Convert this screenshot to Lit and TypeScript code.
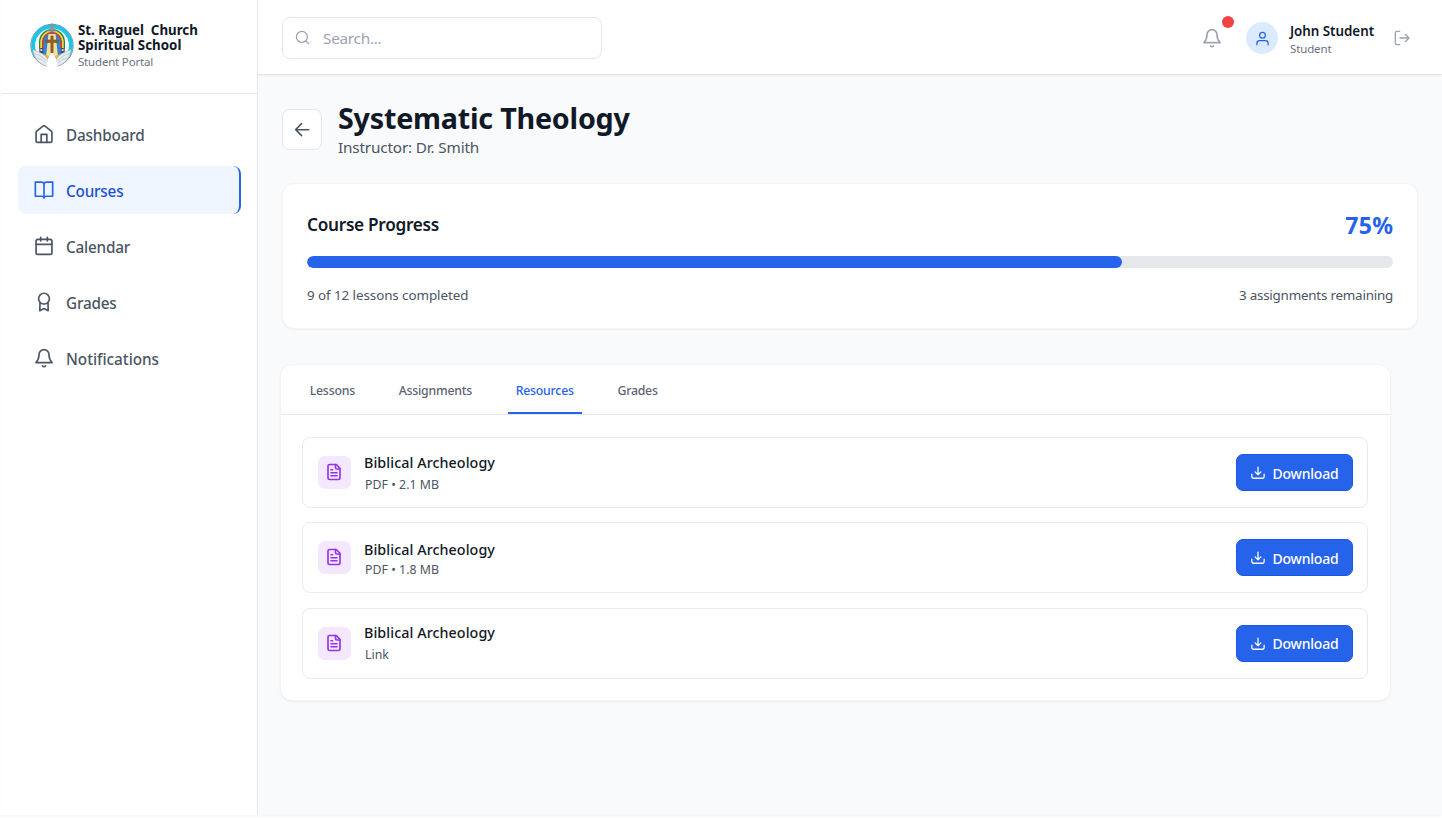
import { LitElement, html, css, svg } from "lit";
import { customElement } from "lit/decorators.js";

const icon = (body: unknown, size = 20, stroke = 2) => html`<svg class="icon" width=${size} height=${size} viewBox="0 0 24 24" fill="none" stroke="currentColor" stroke-width=${stroke} stroke-linecap="round" stroke-linejoin="round">${body}</svg>`;

const icons = {
  home: svg`<path d="M2.500 10.200a2 2 0 0 1 .75-1.560l7.500-6.100a2 2 0 0 1 2.500 0l7.500 6.100a2 2 0 0 1 .75 1.560V20a2 2 0 0 1-2 2h-15a2 2 0 0 1-2-2z"/><path d="M8.600 22v-9.600h6.800V22"/>`,
  book: svg`<path d="M1.600 2.500H9a3.400 3.400 0 0 1 3 2A3.400 3.400 0 0 1 15 2.500h7.400v17h-7.900a3 3 0 0 0-2.500 1.700 3 3 0 0 0-2.500-1.700H1.600z"/><path d="M12 4.500V21.200"/>`,
  calendar: svg`<rect x="2.500" y="4" width="19" height="18" rx="2"/><path d="M8 1.600v4.400M16 1.600v4.400M2.500 10h19"/>`,
  award: svg`<circle cx="12" cy="8" r="6.500"/><path d="M7.200 12.600 7 22.400l5-2.600 5 2.600-.2-9.800"/>`,
  bell: svg`<path d="M6 8a6 6 0 0 1 12 0c0 5 1.500 7.200 3.700 9.500H2.300C4.500 15.200 6 13 6 8z"/><path d="M10.300 21.500a2.200 2.200 0 0 0 3.400 0"/>`,
  search: svg`<circle cx="11" cy="11" r="8.800"/><path d="m21.800 21.800-4.600-4.600"/>`,
  back: svg`<path d="m11.500 19.500-8-8 8-8M3.500 11.500H21"/>`,
  user: svg`<circle cx="12" cy="6.800" r="4.600"/><path d="M3 22v-2a4.500 4.500 0 0 1 4.500-4.500h9a4.500 4.500 0 0 1 4.500 4.500v2"/>`,
  logout: svg`<path d="M8.500 22H4.500a2.500 2.500 0 0 1-2.500-2.500v-15A2.500 2.500 0 0 1 4.500 2h4M17 17.500l5.500-5.500L17 6.500M22 12H9"/>`,
  file: svg`<path d="M15 2H6a2 2 0 0 0-2 2v16a2 2 0 0 0 2 2h12a2 2 0 0 0 2-2V7z"/><path d="M14 2v4a2 2 0 0 0 2 2h4M10 9H8M16 13H8M16 17H8"/>`,
  download: svg`<path d="M1.500 14v4.500A2.500 2.500 0 0 0 4 21h16a2.500 2.500 0 0 0 2.500-2.500V14M7 10l5 5 5-5M12 15V2"/>`,
};

const crest = svg`
  <circle cx="22" cy="23" r="21.200" fill="#e9f3f5" stroke="#4b7a86" stroke-width=".8"/>
  <circle cx="22" cy="23" r="18.900" fill="none" stroke="#1fc3e8" stroke-width="4"/>
  <circle cx="22" cy="23" r="16.600" fill="#f4f7f6"/>
  <path d="M12 36V19a10 10 0 0 1 20 0v17z" fill="#2f86d6"/>
  <g fill="none" stroke-width="1.600">
    <path d="M9.800 26V19.500a12.200 12.200 0 0 1 24.400 0V26" stroke="#23843c"/>
    <path d="M11.300 26V19.500a10.700 10.700 0 0 1 21.400 0V26" stroke="#f2d52a"/>
    <path d="M12.800 26V19.500a9.200 9.200 0 0 1 18.400 0V26" stroke="#d23a2c"/>
  </g>
  <path d="M18.500 11.500h7L28 34H16z" fill="#f5dfa0"/>
  <path d="M20.900 13.500h2.200v4h5v2.500h-5V30h-2.200V20h-5v-2.500h5z" fill="#9a6420" stroke="#6f4518" stroke-width=".6"/>
  <path d="M9.300 25.500h4v5h-4zM30.700 25.500h4v5h-4z" fill="#454a66"/>
  <path d="M10.300 26.500h2v2h-2zM31.700 26.500h2v2h-2z" fill="#c8cbd8"/>
  <path d="M2.800 27c3 1.500 9 3 14.500 8l1 9C10 42.500 4 36 2.800 27zM41.200 27c-3 1.500-9 3-14.500 8l-1 9C34 42.500 40 36 41.200 27z" fill="#e8ecee" stroke="#9fb0b5" stroke-width=".6"/>
  <path d="M4.500 31c4 1 8 3 11.500 7M7 35.500c4 1 6 2 9 5M39.500 31c-4 1-8 3-11.500 7M37 35.500c-4 1-6 2-9 5" fill="none" stroke="#aab6ba" stroke-width=".6"/>
  <path d="M14 32l3.500 5 1-4zM30 32l-3.500 5-1-4z" fill="#efb63b"/>
  <path d="M22 31c2 1 3.600 3 4.200 6l1.300 7c-3 1.600-8 1.600-11 0l1.300-7c.6-3 2.200-5 4.200-6z" fill="#fff"/>
  <path d="M20.300 2.500 22 .300l1.700 2.200v7h-3.400z" fill="#8d9697"/>
  <path d="M17.500 8h9" stroke="#7b8b8e" stroke-width="1.600"/>`;

const nav = [
  { label: "Dashboard", glyph: icons.home },
  { label: "Courses", glyph: icons.book, active: true },
  { label: "Calendar", glyph: icons.calendar },
  { label: "Grades", glyph: icons.award },
  { label: "Notifications", glyph: icons.bell },
];
const tabs = [
  { label: "Lessons" },
  { label: "Assignments" },
  { label: "Resources", active: true },
  { label: "Grades" },
];
const resources = [
  { title: "Biblical Archeology", meta: "PDF • 2.1 MB", row: "r1" },
  { title: "Biblical Archeology", meta: "PDF • 1.8 MB", row: "r2" },
  { title: "Biblical Archeology", meta: "Link", row: "r3" },
];

@customElement("app-root")
export class AppRoot extends LitElement {
  static styles = css`
    :host { display: block; width: 1442px; height: 818px; overflow: hidden; background: #fff;
      font-family: "Noto Sans", "Open Sans", sans-serif; color: #111827; }
    * { box-sizing: border-box; }
    .icon { display: block; flex: none; }
    .shell { display: flex; height: 815px; padding-left: 2px; background: #fdfdfe; box-shadow: 0 1px 2px rgba(0,0,0,.05); }
    .side { width: 256px; flex: none; background: #fff; border-right: 1px solid #e5e7eb; }
    .brand { height: 94px; border-bottom: 1px solid #e5e7eb; padding: 22px 0 0 28px; display: flex; gap: 4px; }
    .brand-text { white-space: pre; padding-top: 1px; }
    .brand b { display: block; font-size: 13.3px; line-height: 15px; font-weight: 700; }
    .brand b + b { letter-spacing: .04px; }
    .brand span { display: block; font-size: 11.500px; line-height: 16px; margin-top: 1px; color: #6b7280; letter-spacing: -.19px; }
    .nav { padding: 16px; display: grid; gap: 8px; }
    .item { height: 48px; width: 223px; border-radius: 8px; display: flex; align-items: center; gap: 12px; padding: 0 16px; color: #4b5563;
      font-size: 15.3px; font-weight: 500; letter-spacing: -.19px; }
    .item:last-child { letter-spacing: -.03px; }
    .item span { margin-top: 2px; white-space: nowrap; }
    .item.active { background: #eff6ff; color: #1d4ed8; border-right: 2px solid #2563eb; }
    .item.active .icon { color: #2563eb; }
    .main { flex: 1; min-width: 0; background: #f9fafb; }
    .top { height: 75px; background: #fff; border-bottom: 1px solid #e5e7eb; box-shadow: 0 1px 2px rgba(0,0,0,.05);
      padding: 2px 32px 0 24px; display: flex; align-items: center; }
    .search { width: 320px; height: 42px; border: 1px solid #e5e7eb; border-radius: 8px; display: flex; align-items: center; gap: 13px;
      padding: 0 12px 1px; color: #9ca3af; font-size: 15.3px; letter-spacing: -.25px; }
    .user { margin-left: auto; display: flex; align-items: center; }
    .bell { position: relative; color: #9ca3af; margin-right: 24px; }
    .dot { position: absolute; left: 20px; top: -12px; width: 12px; height: 12px; border-radius: 50%; background: #ef4444; }
    .avatar { width: 32px; height: 32px; border-radius: 50%; background: #dbeafe; color: #2563eb; display: grid; place-items: center; margin-right: 12px; }
    .who { width: 104px; }
    .who b { display: block; font-size: 13.4px; line-height: 20px; font-weight: 600; white-space: nowrap; letter-spacing: -.04px; margin-top: 1px; }
    .who span { display: block; font-size: 11.500px; line-height: 16px; color: #6b7280; letter-spacing: -.13px; }
    .out { color: #9ca3af; }
    .content { padding: 25px 24px 0; }
    .heading { display: flex; gap: 16px; height: 60px; }
    .back { width: 40px; height: 41px; margin-top: 9px; border: 1px solid #e5e7eb; border-radius: 8px; background: #fff; display: grid; place-items: center; color: #4b5563; }
    h1 { margin: 0; font-size: 28.700px; line-height: 36px; font-weight: 700; white-space: nowrap; letter-spacing: -.22px; }
    .sub { font-size: 15.3px; line-height: 24px; color: #4b5563; margin-top: -1px; letter-spacing: -.16px; }
    .card { background: #fff; border: 1px solid #f3f4f6; border-radius: 12px; box-shadow: 0 1px 2px rgba(0,0,0,.05); }
    .progress { margin-top: 23px; height: 146px; padding: 23px 24px 0 24px; }
    .line { display: flex; justify-content: space-between; align-items: center; }
    .line h2 { margin: 0; font-size: 17.200px; line-height: 32px; font-weight: 600; letter-spacing: -.28px; }
    .line strong { font-size: 23px; line-height: 36px; font-weight: 700; color: #2563eb; letter-spacing: .4px; margin-right: -.4px; }
    .track { height: 12px; border-radius: 6px; background: #e5e7eb; margin-top: 13px; overflow: hidden; }
    .fill { height: 100%; border-radius: 6px; background: #2563eb; }
    .small { font-size: 13.4px; line-height: 20px; color: #4b5563; margin-top: 17px; letter-spacing: -.07px; }
    .small span + span { letter-spacing: -.22px; }
    .panel { width: 1111px; height: 337px; margin: 35px 0 0 -2px; }
    .tabs { height: 50px; border-bottom: 1px solid #e5e7eb; display: flex; padding-left: 20.700px; gap: 27.700px; }
    .tab { height: 49px; padding: 0 8px; line-height: 51px; font-size: 12.3px; font-weight: 500; color: #5b6472; white-space: nowrap; letter-spacing: -.22px; }
    .tab.active { color: #2563eb; border-bottom: 2px solid #2563eb; }
    .rows { padding: 22px 22px 0 21px; display: grid; gap: 14.400px; }
    .row { height: 71px; border: 1px solid #e9ebee; border-radius: 8px; display: flex; align-items: flex-start; padding: 0 14px 0 15px; }
    .tile { width: 33px; height: 33px; border-radius: 7px; background: #f3e8ff; color: #9333ea; margin: 18px 13px 0 0; padding: 7px 0 0 7px; }
    .info { flex: 1; }
    .title { display: block; font-size: 14.300px; line-height: 22px; font-weight: 500; margin-top: 14px; letter-spacing: .07px; }
    .meta { display: block; font-size: 12.3px; line-height: 18px; color: #4b5563; margin: 1.500px 0 0 1px; letter-spacing: .04px; }
    .r2 .title { margin-top: 15.600px; } .r2 .meta { margin-top: -.4px; }
    .r3 .title { margin-top: 13.200px; } .r3 .meta { margin-top: 2.500px; }
    .dl { width: 117px; height: 37px; margin-top: 16px; border: 1px solid #1d55ea; border-radius: 7px; background: #2563eb; color: #fff;
      display: flex; align-items: center; padding: 1px 0 0 14px; gap: 7.500px; font-family: inherit; font-size: 14px; font-weight: 500; letter-spacing: -.2px; }
  `;

  render() {
    return html`<div class="shell">
      <aside class="side">
        <div class="brand">
          <svg class="icon" width="44" height="47" viewBox="0 0 44 46">${crest}</svg>
          <div class="brand-text"><b>St. Raguel  Church</b><b>Spiritual School</b><span>Student Portal</span></div>
        </div>
        <nav class="nav">${nav.map((n) => html`<a class="item ${n.active ? "active" : ""}">${icon(n.glyph, 20)}<span>${n.label}</span></a>`)}</nav>
      </aside>
      <main class="main">
        <header class="top">
          <div class="search">${icon(icons.search, 15)}<span>Search...</span></div>
          <div class="user">
            <div class="bell">${icon(icons.bell, 20)}<i class="dot"></i></div>
            <div class="avatar">${icon(icons.user, 15)}</div>
            <div class="who"><b>John Student</b><span>Student</span></div>
            <div class="out">${icon(icons.logout, 16)}</div>
          </div>
        </header>
        <div class="content">
          <div class="heading">
            <div class="back">${icon(icons.back, 18)}</div>
            <div><h1>Systematic Theology</h1><div class="sub">Instructor: Dr. Smith</div></div>
          </div>
          <section class="card progress">
            <div class="line"><h2>Course Progress</h2><strong>75%</strong></div>
            <div class="track"><div class="fill" style="width:75%"></div></div>
            <div class="line small"><span>9 of 12 lessons completed</span><span>3 assignments remaining</span></div>
          </section>
          <section class="card panel">
            <div class="tabs">${tabs.map((t) => html`<div class="tab ${t.active ? "active" : ""}">${t.label}</div>`)}</div>
            <div class="rows">${resources.map((r) => html`<div class="row ${r.row}">
              <div class="tile">${icon(icons.file, 18, 2.2)}</div>
              <div class="info"><span class="title">${r.title}</span><span class="meta">${r.meta}</span></div>
              <button class="dl">${icon(icons.download, 14, 2.2)}<span>Download</span></button>
            </div>`)}</div>
          </section>
        </div>
      </main>
    </div>`;
  }
}
